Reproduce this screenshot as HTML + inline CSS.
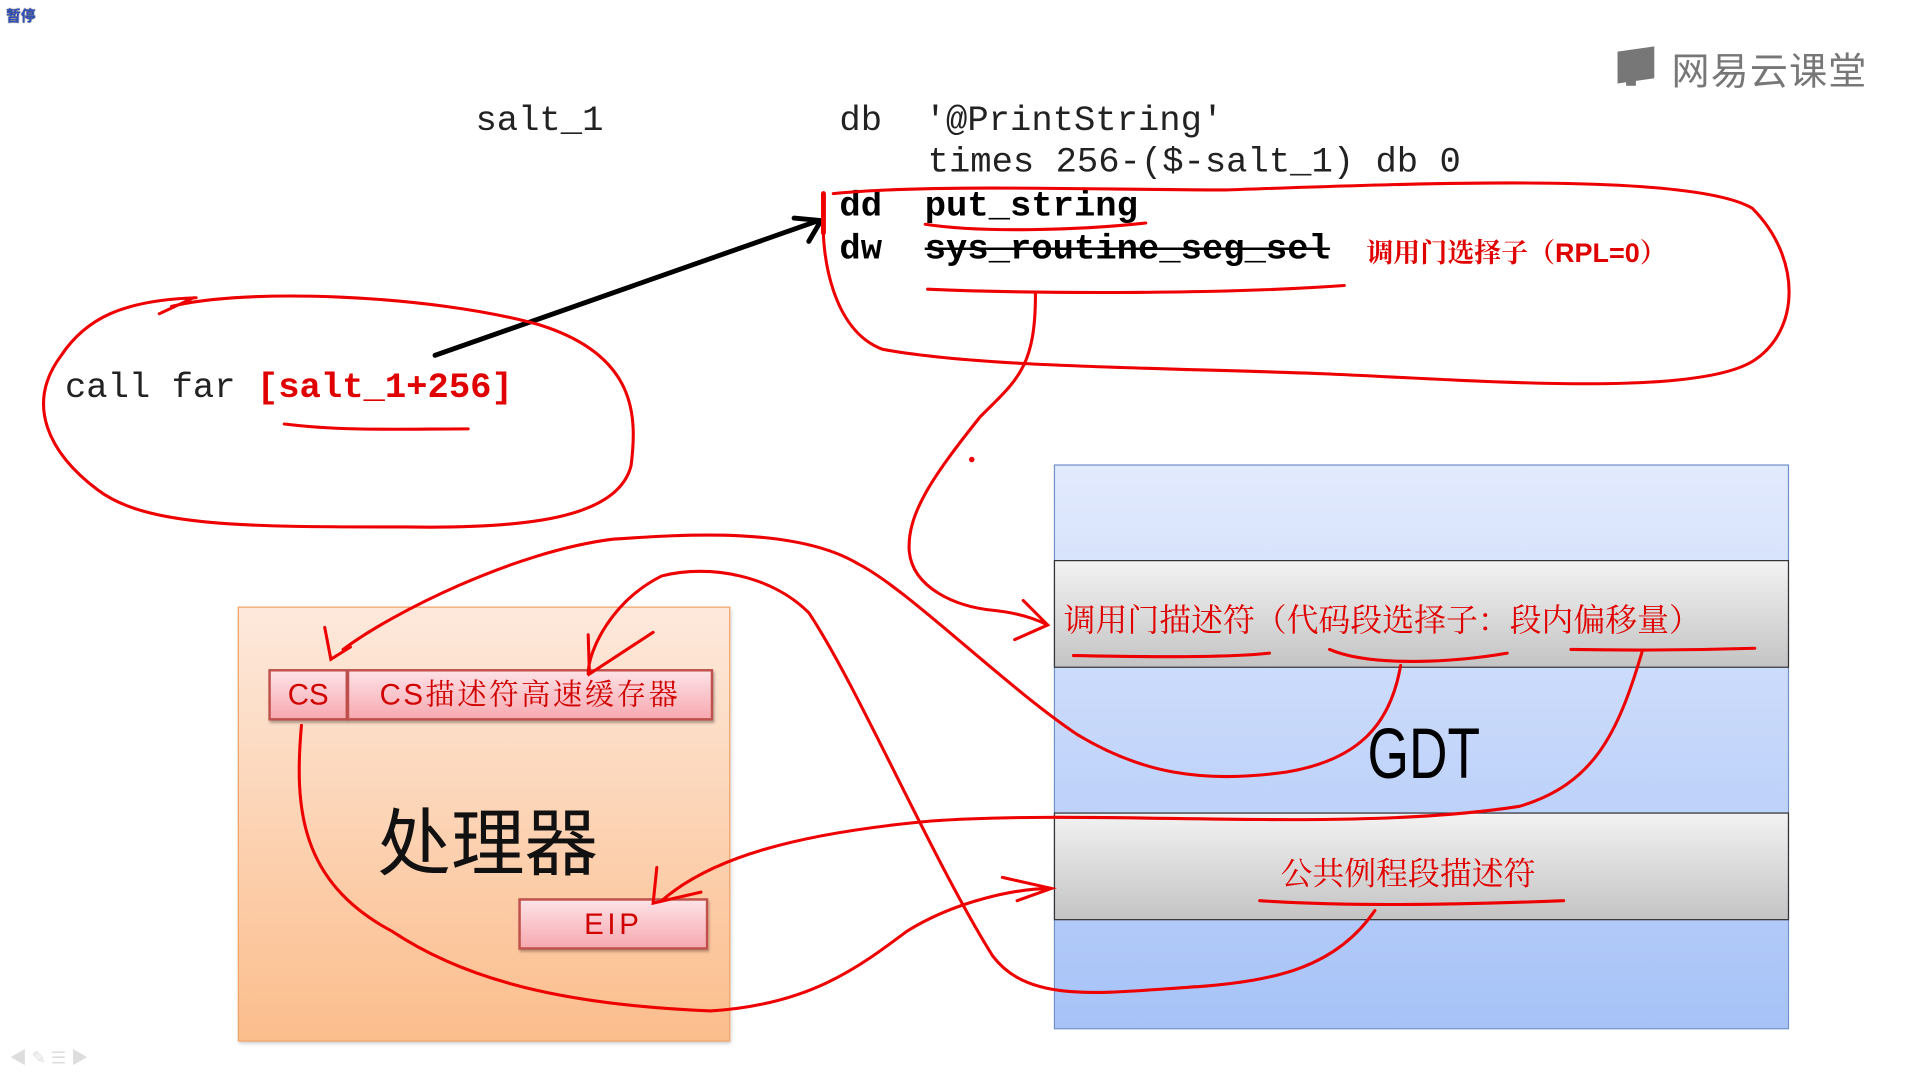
<!DOCTYPE html>
<html><head><meta charset="utf-8"><style>
html,body{margin:0;padding:0;background:#fff;overflow:hidden;width:1920px;height:1080px}
#w{position:absolute;left:0;top:0;width:1567px;height:882px;transform:scale(1.2254);transform-origin:0 0;font-family:"Liberation Sans","Noto Sans CJK SC",sans-serif}
.a{position:absolute;white-space:pre}
.m{font-family:"Liberation Mono","Noto Sans CJK SC",monospace;font-size:29px;color:#222;line-height:34px}
.b{font-weight:bold;color:#000}
.r{color:#e00000}
.cell{position:absolute;background:linear-gradient(#fde2e6,#f7a9b1);border:2px solid #c0504d;box-shadow:1px 2px 2px rgba(0,0,0,.3);color:#d00000;text-align:center;font-family:"Liberation Sans","Noto Serif CJK SC",sans-serif;box-sizing:border-box}
</style></head><body><div id="w">
<div class="a" style="left:5px;top:4px;font-size:12px;font-weight:bold;color:#3050c0;text-shadow:0 0 1px #000">暂停</div>
<div class="a" style="left:1320px;top:40px;width:30px;height:26px;background:#777;transform:skewY(-8deg)"></div>
<div class="a" style="left:1327px;top:64px;width:8px;height:6px;background:#777"></div>
<div class="a" style="left:1364px;top:33px;font-size:31px;color:#777;letter-spacing:1px">网易云课堂</div>

<div class="a m" style="left:388px;top:82px">salt_1</div>
<div class="a m" style="left:685px;top:82px">db  '@PrintString'</div>
<div class="a m" style="left:757px;top:116px">times 256-($-salt_1) db 0</div>
<div class="a m b" style="left:685px;top:152px">dd  put_string</div>
<div class="a m b" style="left:685px;top:187px">dw  <s>sys_routine_seg_sel</s></div>
<div class="a r" style="left:1115px;top:190px;font-size:22px;font-weight:bold;font-family:'Liberation Sans','Noto Serif CJK SC',sans-serif">调用门选择子（RPL=0）</div>
<div class="a m" style="left:53px;top:300px">call far <span class="b r" style="color:#e00000">[salt_1+256]</span></div>

<div class="a" style="left:860px;top:379px;width:600px;height:461px;border:1px solid #6f8fc8;box-sizing:border-box;background:linear-gradient(#e2eafd,#a6c2f7)"></div>
<div class="a" style="left:860px;top:457px;width:600px;height:88px;border:1px solid #333;box-sizing:border-box;background:linear-gradient(#f2f2f2,#c4c4c4)"></div>
<div class="a" style="left:860px;top:663px;width:600px;height:88px;border:1px solid #333;box-sizing:border-box;background:linear-gradient(#f2f2f2,#c4c4c4)"></div>
<div class="a r" style="left:868px;top:486px;font-size:26px;font-family:'Liberation Serif','Noto Serif CJK SC',serif">调用门描述符（代码段选择子：段内偏移量）</div>
<div class="a r" style="left:1045px;top:693px;font-size:26px;font-family:'Liberation Serif','Noto Serif CJK SC',serif">公共例程段描述符</div>
<div class="a" style="left:1116px;top:582px;font-size:58px;color:#000;transform:scaleX(.75);transform-origin:0 0">GDT</div>

<div class="a" style="left:194px;top:495px;width:402px;height:355px;border:1px solid #f0a060;box-sizing:border-box;background:linear-gradient(#fde9dc,#fbbd8c);box-shadow:1px 2px 3px rgba(0,0,0,.2)"></div>
<div class="cell" style="left:219px;top:546px;width:65px;height:42px;font-size:24px;line-height:40px">CS</div>
<div class="cell" style="left:283px;top:546px;width:299px;height:42px;font-size:24px;line-height:40px;letter-spacing:2px">CS描述符高速缓存器</div>
<div class="cell" style="left:423px;top:733px;width:155px;height:42px;font-size:24px;line-height:40px;letter-spacing:3px">EIP</div>
<div class="a" style="left:308px;top:640px;font-size:60px;color:#111">处理器</div>

<div class="a" style="left:8px;top:853px;font-size:14px;color:#ddd">◀ ✎ ☰ ▶</div>

<svg class="a" style="left:0;top:0" width="1567" height="882" fill="none" stroke="#e00" stroke-width="2.5" stroke-linecap="round">
<path d="M355 290 L668 180" stroke="#000" stroke-width="4"/>
<path d="M648 178 L670 180 L660 197" stroke="#000" stroke-width="4"/>
<path d="M672 158 L672 190" stroke-width="4"/>
<path d="M680 158 C760 150 900 155 1000 155 C1150 150 1380 140 1430 170 C1470 210 1470 270 1430 295 C1380 325 1200 310 1080 305 C950 300 800 300 720 285 C680 270 670 210 672 175"/>
<path d="M757 236 C850 240 1000 240 1097 233"/>
<path d="M755 183 C800 190 880 188 935 182"/>
<path d="M140 250 C200 235 350 240 440 265 C520 290 520 340 515 380 C505 420 440 432 330 430 C200 430 120 430 80 400 C40 370 20 330 50 290 C70 260 100 245 160 243 M130 256 L158 243"/>
<path d="M232 346 C280 352 330 350 382 350"/>
<path d="M845 240 C845 300 830 310 800 340 C760 390 740 420 742 450 C745 480 780 495 810 498 C830 500 845 505 855 510 M835 490 L855 510 L828 522"/>
<circle cx="793" cy="375" r="1" fill="#e00"/>
<path d="M876 535 C930 536 1000 537 1036 533"/>
<path d="M1085 530 C1120 545 1190 540 1230 533"/>
<path d="M1282 530 C1340 531 1400 530 1432 529"/>
<path d="M1028 735 C1100 740 1200 738 1276 735"/>
<path d="M1143 543 C1135 590 1110 620 1050 630 C980 640 930 630 880 600 C820 560 740 480 700 460 C650 430 560 436 500 440 C420 450 320 500 280 530 M265 512 L270 538 L286 528"/>
<path d="M1340 532 C1320 600 1300 640 1240 658 C1100 680 900 660 760 670 C650 680 580 700 540 735 M536 708 L533 737 L572 728"/>
<path d="M1122 743 C1090 790 1040 800 980 805 C900 810 840 820 810 780 C760 700 700 560 660 500 C630 470 580 460 540 470 C500 490 480 530 480 550 M480 518 L481 550 L533 516"/>
<path d="M246 592 C240 660 245 720 320 760 C380 800 460 820 580 825 C660 820 700 790 740 760 C780 735 830 725 858 725 M818 716 L858 725 L830 735"/>
</svg>
</div></body></html>
